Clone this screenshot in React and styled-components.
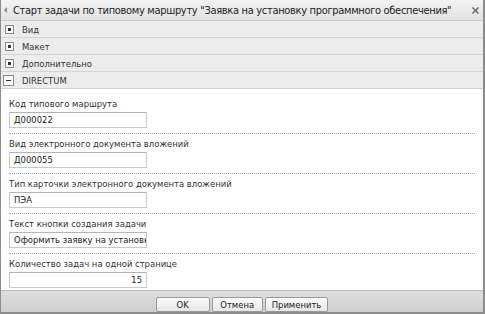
import React from 'react'
import styled, { createGlobalStyle } from 'styled-components'

const GlobalStyle = createGlobalStyle`
  html, body {
    margin: 0;
    padding: 0;
    background: #fff;
    overflow: hidden;
  }
  body {
    font-family: "DejaVu Sans Condensed", "DejaVu Sans", sans-serif;
    color: #333;
  }
`

const Dialog = styled.div`
  width: 485px;
  height: 314px;
  box-sizing: border-box;
  display: flex;
  flex-direction: column;
  border: 1px solid #8c8c8c;
  border-top: none;
  border-right-width: 2px;
  background: #fff;
  overflow: hidden;
`

const TitleBar = styled.div`
  height: 20px;
  flex: none;
  display: grid;
  grid-template-columns: 9px minmax(0, 1fr) 12px;
  align-items: center;
  padding: 0 2px 0 3px;
  background: linear-gradient(#f3f3f3, #e2e2e2);
  border-bottom: 1px solid #c9c9c9;
  color: #222;
  white-space: nowrap;
`

const Grip = styled.span`
  width: 0;
  height: 0;
  border-top: 3px solid transparent;
  border-bottom: 3px solid transparent;
  border-right: 3px solid #888;
`

const Title = styled.span`
  font-size: 11px;
  letter-spacing: -0.32px;
  overflow: hidden;
`

const Close = styled.svg`
  width: 7px;
  height: 7px;
  display: block;
  justify-self: center;
`

const Section = styled.div`
  height: 16px;
  flex: none;
  display: flex;
  align-items: center;
  background: #ececec;
  border-bottom: 1px solid #d4d4d4;
  font-size: 9.4px;
  color: #333;
`

const Toggle = styled.span`
  width: ${({ open }) => (open ? 9 : 7)}px;
  height: ${({ open }) => (open ? 9 : 7)}px;
  margin: 0 8px 0 ${({ open }) => (open ? 2 : 4)}px;
  border: 1px solid #8a8a8a;
  background: #fff;
  position: relative;
  flex: none;
  &::after {
    content: '';
    position: absolute;
    background: #333;
    left: 2px;
    top: ${({ open }) => (open ? 4 : 2)}px;
    width: ${({ open }) => (open ? 5 : 3)}px;
    height: ${({ open }) => (open ? 1 : 3)}px;
  }
`

const Body = styled.div`
  flex: 1;
  min-height: 0;
  overflow: hidden;
  padding: 5px 8px 0 8px;
`

const Field = styled.div`
  padding: 3px 0 5px;
  border-bottom: 1px dotted #8fa8cf;
  &:last-child {
    border-bottom: none;
  }
`

const Label = styled.div`
  font-size: 9.4px;
  line-height: 13px;
  color: #333;
  margin-bottom: 2px;
  white-space: nowrap;
`

const Input = styled.div`
  width: 138px;
  height: 16px;
  box-sizing: border-box;
  border: 1px solid #c8c8c8;
  border-top-color: #b4b4b4;
  padding: 0 4px;
  font-size: 9.4px;
  line-height: 14px;
  color: #222;
  white-space: nowrap;
  overflow: hidden;
  text-align: ${({ right }) => (right ? 'right' : 'left')};
`

const Footer = styled.div`
  height: 23px;
  flex: none;
  display: flex;
  justify-content: center;
  align-items: flex-start;
  gap: 2px;
  padding-top: 6px;
  box-sizing: border-box;
  background: linear-gradient(#dedede, #cfcfcf);
  border-top: 1px solid #bdbdbd;
  border-bottom: 1px solid #8c8c8c;
`

const Button = styled.button`
  height: 15px;
  min-width: ${({ w }) => w}px;
  padding: 0 6px;
  margin: 0;
  font-family: inherit;
  font-size: 9.4px;
  color: #222;
  background: linear-gradient(#fdfdfd, #e6e6e6);
  border: 1px solid #9a9a9a;
  border-radius: 2px;
  line-height: 13px;
`

const sections = [
  { name: 'Вид' },
  { name: 'Макет' },
  { name: 'Дополнительно' },
  { name: 'DIRECTUM', open: true },
]

const fields = [
  { label: 'Код типового маршрута', value: 'Д000022' },
  { label: 'Вид электронного документа вложений', value: 'Д000055' },
  { label: 'Тип карточки электронного документа вложений', value: 'ПЭА' },
  { label: 'Текст кнопки создания задачи', value: 'Оформить заявку на установку' },
  { label: 'Количество задач на одной странице', value: '15', right: true },
]

export default function App() {
  return (
    <>
      <GlobalStyle />
      <Dialog>
        <TitleBar>
          <Grip />
          <Title>Старт задачи по типовому маршруту "Заявка на установку программного обеспечения"</Title>
          <Close viewBox="0 0 7 7">
            <path d="M0.5 0.5 L6.5 6.5 M6.5 0.5 L0.5 6.5" stroke="#6a6a6a" strokeWidth="1.5" fill="none" />
          </Close>
        </TitleBar>
        {sections.map((s) => (
          <Section key={s.name}>
            <Toggle open={s.open} />
            {s.name}
          </Section>
        ))}
        <Body>
          {fields.map((f) => (
            <Field key={f.label}>
              <Label>{f.label}</Label>
              <Input right={f.right}>{f.value}</Input>
            </Field>
          ))}
        </Body>
        <Footer>
          <Button w={54}>OK</Button>
          <Button w={51}>Отмена</Button>
          <Button w={63}>Применить</Button>
        </Footer>
      </Dialog>
    </>
  )
}
